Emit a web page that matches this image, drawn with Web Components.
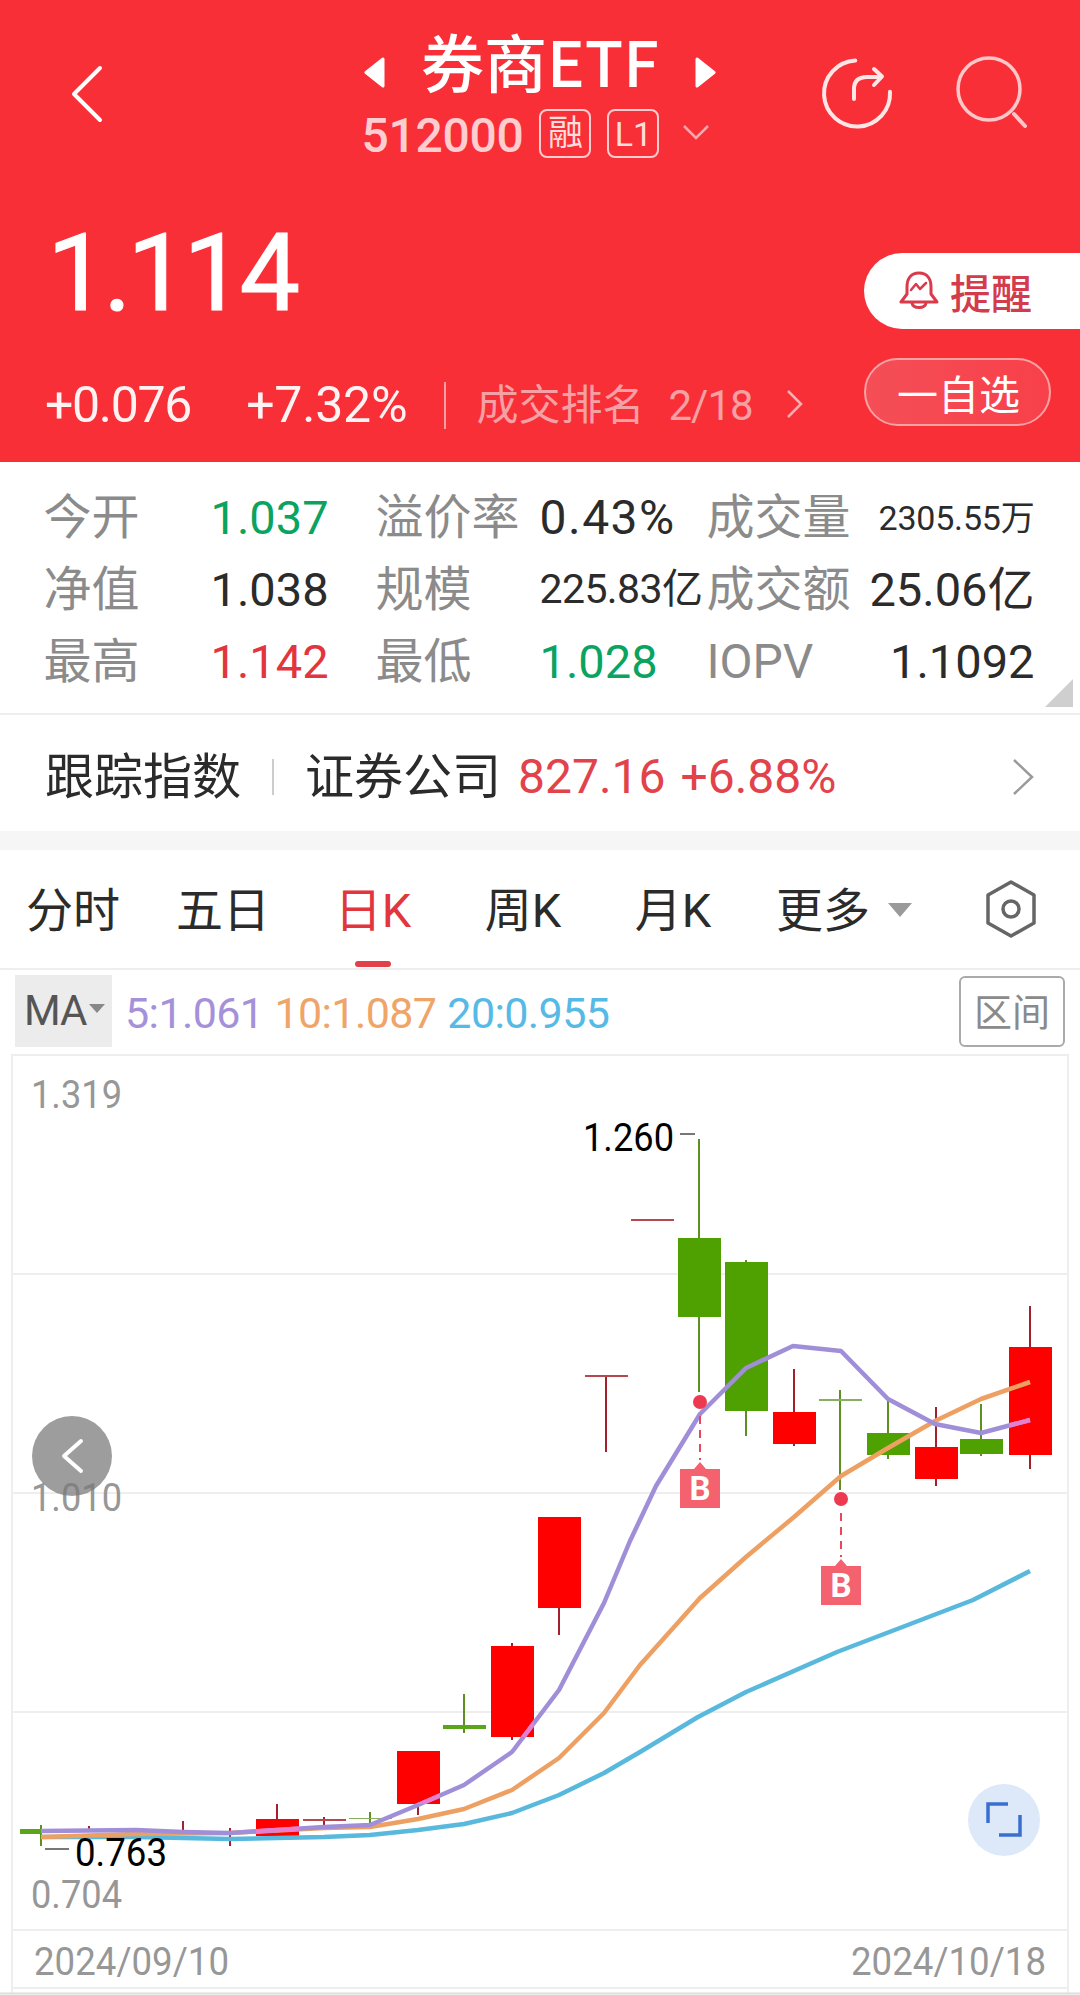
<!DOCTYPE html>
<html lang="zh">
<head>
<meta charset="utf-8">
<title>券商ETF</title>
<style>
  html, body { margin: 0; padding: 0; background: #fff; }
  body { width: 1080px; height: 1995px; overflow: hidden; font-family: Roboto, "Noto Sans CJK SC", sans-serif; }
</style>
</head>
<body>
<quote-header></quote-header>

<stat-grid>
  <stat-label>今开</stat-label><stat-value tone="green">1.037</stat-value>
  <stat-label>溢价率</stat-label><stat-value wide>0.43%</stat-value>
  <stat-label>成交量</stat-label><stat-value size="small" end>2305.55万</stat-value>
  <stat-label>净值</stat-label><stat-value>1.038</stat-value>
  <stat-label>规模</stat-label><stat-value tight>225.83亿</stat-value>
  <stat-label>成交额</stat-label><stat-value end>25.06亿</stat-value>
  <stat-label>最高</stat-label><stat-value tone="red">1.142</stat-value>
  <stat-label>最低</stat-label><stat-value tone="green">1.028</stat-value>
  <stat-label>IOPV</stat-label><stat-value end>1.1092</stat-value>
</stat-grid>

<index-row name="证券公司" value="827.16" change="+6.88%">跟踪指数</index-row>

<period-tabs>
  <period-tab>分时</period-tab>
  <period-tab>五日</period-tab>
  <period-tab active>日K</period-tab>
  <period-tab>周K</period-tab>
  <period-tab>月K</period-tab>
  <period-tab more>更多</period-tab>
</period-tabs>

<ma-bar></ma-bar>
<kline-chart></kline-chart>

<script>
const CJK = 'Roboto, "Noto Sans CJK SC", sans-serif';

class QuoteHeader extends HTMLElement {
  constructor() {
    super();
    this.attachShadow({ mode: "open" });
    this.shadowRoot.innerHTML = `
      <style>
        :host { display: block; height: 462px; background: #f92f38; color: #fff; font-family: ${CJK}; box-sizing: border-box; }
        svg { display: block; }
        .top { display: grid; grid-template-columns: 1fr auto 1fr; height: 165px; }
        .back { padding: 65px 0 0 71px; }
        .center { display: flex; flex-direction: column; align-items: center; }
        .title { display: flex; align-items: center; gap: 36px; height: 109px; padding-top: 19px; box-sizing: border-box; }
        .title svg { margin-top: 17px; }
        .title span { font: 500 63px/90px "Noto Sans CJK SC", sans-serif; margin-top: -8px; }
        .code { display: flex; align-items: center; height: 49px; padding-right: 6px; color: #fdcdd0; }
        .code b { font: 500 48px/49px Roboto, sans-serif; letter-spacing: -.3px; margin: 4px 16px 0 -2px; }
        .badge { width: 52px; height: 49px; box-sizing: border-box; border: 2px solid #fdcdd0; border-radius: 8px; display: flex; align-items: center; justify-content: center; font-size: 35px; line-height: 1; color: #fdd; margin-right: 16px; }
        .actions { display: flex; justify-content: flex-end; gap: 63px; padding: 56px 52px 0 0; align-items: flex-start; }
        .main { display: flex; justify-content: space-between; }
        .left { padding: 54px 0 0 45px; }
        .price { font: 400 108px/108px Roboto, sans-serif; letter-spacing: -4.5px; -webkit-text-stroke: 1px #fff; margin-left: 2px; height: 108px; }
        .change { display: flex; align-items: center; margin-top: 54px; height: 48px; }
        .change .num { font: 400 50px/48px Roboto, sans-serif; color: #fff2f2; letter-spacing: -1.3px; }
        .change .num + .num { margin-left: 55px; letter-spacing: -.2px; }
        .sep { width: 2px; height: 47px; background: #f9a0a0; margin: 0 30px 0 37px; }
        .rank { font-size: 42px; color: #f5a0a4; margin-top: -7px; }
        .rank em { font: 400 42px Roboto, sans-serif; margin-left: 24px; letter-spacing: -1px; }
        .rank-go { margin-left: 33px; margin-top: -3px; }
        .right { display: flex; flex-direction: column; padding-top: 88px; width: 216px; }
      </style>
      <div class="top">
        <div class="back">
          <svg width="32" height="58" viewBox="0 0 32 58"><path d="M29 3 3 29l26 26" fill="none" stroke="#fff" stroke-width="4" stroke-linecap="round" stroke-linejoin="round"/></svg>
        </div>
        <div class="center">
          <div class="title">
            <svg width="21" height="31" viewBox="0 0 21 31"><path d="M19 2 2 15.500 19 29Z" fill="#fff" stroke="#fff" stroke-width="3" stroke-linejoin="round"/></svg>
            <span>券商ETF</span>
            <svg width="21" height="31" viewBox="0 0 21 31"><path d="M2 2 19 15.500 2 29Z" fill="#fff" stroke="#fff" stroke-width="3" stroke-linejoin="round"/></svg>
          </div>
          <div class="code">
            <b>512000</b>
            <span class="badge">融</span>
            <span class="badge" style="font-family:Roboto,sans-serif;font-size:34px">L1</span>
            <svg width="28" height="16" viewBox="0 0 28 16" style="margin:-4px 0 0 7px"><path d="M2 2 14 14 26 2" fill="none" stroke="#fba9ae" stroke-width="2.500"/></svg>
          </div>
        </div>
        <div class="actions">
          <svg width="72" height="74" viewBox="0 0 72 74">
            <path d="M36 4.500A33 33 0 1 0 69 37.500" fill="none" stroke="#ffe6e6" stroke-width="4" stroke-linecap="round" transform="rotate(-3 36 37)"/>
            <path d="M33 43V33Q33 21 46 21H59M53 13 61 20.500 53 29" fill="none" stroke="#ffe6e6" stroke-width="4" stroke-linecap="round" stroke-linejoin="round"/>
          </svg>
          <svg width="72" height="74" viewBox="0 0 72 74">
            <circle cx="33" cy="33" r="31" fill="none" stroke="#fdc6c8" stroke-width="3.500"/>
            <path d="M58 58 69 70" stroke="#fdc6c8" stroke-width="4" stroke-linecap="round"/>
          </svg>
        </div>
      </div>
      <div class="main">
        <div class="left">
          <div class="price">1.114</div>
          <div class="change">
            <span class="num">+0.076</span>
            <span class="num">+7.32%</span>
            <span class="sep"></span>
            <span class="rank">成交排名<em>2/18</em></span>
            <svg class="rank-go" width="17" height="30" viewBox="0 0 17 30"><path d="M2 2 15 15 2 28" fill="none" stroke="#f8b0b3" stroke-width="2.500"/></svg>
          </div>
        </div>
        <div class="right">
          <pill-button kind="alert">
            <svg slot="icon" width="40" height="40" viewBox="0 0 40 40" fill="none" stroke="#d93a4c" stroke-width="3" stroke-linejoin="round" stroke-linecap="round">
              <path d="M20 2C11 2 8 9 8 16V23L2 31H38L32 23V16C32 9 29 2 20 2Z"/>
              <path d="M13 32C14 38 26 38 27 32"/>
              <path d="M12 19 17 13 21 18 27 12" stroke-width="2.500"/>
            </svg>
            提醒
          </pill-button>
          <pill-button>一自选</pill-button>
        </div>
      </div>
    `;
  }
}
customElements.define("quote-header", QuoteHeader);

class PillButton extends HTMLElement {
  constructor() {
    super();
    this.attachShadow({ mode: "open" });
    this.shadowRoot.innerHTML = `
      <style>
        :host { display: flex; align-items: center; box-sizing: border-box; font-size: 41px; line-height: 1; font-family: "Noto Sans CJK SC", sans-serif;
          width: 187px; height: 68px; margin-top: 29px; border: 2px solid #f9a2a4; border-radius: 34px; background: linear-gradient(90deg, #f44e57, #f8404a); color: #fff; justify-content: center; padding-left: 2px; }
        :host([kind="alert"]) { width: 216px; height: 76px; margin-top: 0; border: 0; border-radius: 38px 0 0 38px; background: #fff; color: #d33c4c; justify-content: flex-start; padding-left: 35px; gap: 11px; font-weight: 500; }
        ::slotted(svg) { display: block; }
      </style>
      <slot name="icon"></slot><slot></slot>
    `;
  }
}
customElements.define("pill-button", PillButton);

class StatGrid extends HTMLElement {
  constructor() {
    super();
    this.attachShadow({ mode: "open" });
    this.shadowRoot.innerHTML = `
      <style>
        :host { display: block; position: relative; height: 253px; box-sizing: border-box; border-bottom: 2px solid #eee; padding: 20px 0 0 43.500px; }
        .grid { display: grid; grid-template-columns: 167px 165px 164px 167px 165px 163px; grid-auto-rows: 72px; align-items: center; }
        .corner { position: absolute; right: 7px; bottom: 6px; width: 28px; height: 28px; background: #cfcfcf; clip-path: polygon(100% 0, 100% 100%, 0 100%); }
      </style>
      <div class="grid"><slot></slot></div>
      <div class="corner"></div>
    `;
  }
}
customElements.define("stat-grid", StatGrid);

class StatLabel extends HTMLElement {
  constructor() {
    super();
    this.attachShadow({ mode: "open" });
    this.shadowRoot.innerHTML = `
      <style>:host { display: block; font: 400 48px/1.2 ${CJK}; color: #8b8b8b; white-space: nowrap; }</style>
      <slot></slot>
    `;
  }
}
customElements.define("stat-label", StatLabel);

class StatValue extends HTMLElement {
  constructor() {
    super();
    this.attachShadow({ mode: "open" });
    this.shadowRoot.innerHTML = `
      <style>
        :host { display: block; font: 400 47px/1.2 ${CJK}; color: #2b2b2b; white-space: nowrap; letter-spacing: 0; }
        :host([tone="green"]) { color: #0aa35f; }
        :host([tone="red"]) { color: #e2363f; }
        :host([end]) { justify-self: end; }
        :host([size="small"]) { font-size: 34px; letter-spacing: -.2px; }
        :host([tight]) { font-size: 41px; letter-spacing: -.6px; }
        :host([wide]) { font-size: 48px; letter-spacing: 1.500px; }
      </style>
      <slot></slot>
    `;
  }
}
customElements.define("stat-value", StatValue);

class IndexRow extends HTMLElement {
  connectedCallback() {
    if (this.shadowRoot) return;
    this.attachShadow({ mode: "open" });
    this.shadowRoot.innerHTML = `
      <style>
        :host { display: flex; align-items: center; height: 135px; box-sizing: border-box; padding: 8px 45px 0; border-bottom: 19px solid #f6f6f6; font: 400 49px/1 ${CJK}; color: #2b2b2b; }
        .sep { width: 2px; height: 36px; background: #ccc; margin: 0 31px; }
        .hot { color: #e2434b; margin-left: 17px; font-size: 48px; word-spacing: 3px; white-space: nowrap; }
        .go { margin-left: auto; }
      </style>
      <slot></slot>
      <span class="sep"></span>
      <span>${this.getAttribute("name")}</span>
      <span class="hot">${this.getAttribute("value")} ${this.getAttribute("change")}</span>
      <svg class="go" width="24" height="38" viewBox="0 0 24 38"><path d="M3 2 21 19 3 36" fill="none" stroke="#9a9a9a" stroke-width="2.500"/></svg>
    `;
  }
}
customElements.define("index-row", IndexRow);

class PeriodTabs extends HTMLElement {
  constructor() {
    super();
    this.attachShadow({ mode: "open" });
    this.shadowRoot.innerHTML = `
      <style>
        :host { display: flex; align-items: center; height: 120px; box-sizing: border-box; border-bottom: 2px solid #eee; position: relative; }
        .tabs { display: grid; grid-template-columns: repeat(6, 150px); height: 100%; margin-left: -2px; }
        .gear { position: absolute; right: 43px; top: 30px; }
      </style>
      <div class="tabs"><slot></slot></div>
      <svg class="gear" width="52" height="58" viewBox="0 0 52 58" fill="none" stroke="#666" stroke-width="3.500" stroke-linejoin="round">
        <path d="M26 2 49 15V43L26 56 3 43V15Z"/>
        <circle cx="26" cy="29" r="8"/>
      </svg>
    `;
  }
}
customElements.define("period-tabs", PeriodTabs);

class PeriodTab extends HTMLElement {
  constructor() {
    super();
    this.attachShadow({ mode: "open" });
    this.shadowRoot.innerHTML = `
      <style>
        :host { display: flex; align-items: center; justify-content: center; position: relative; font: 400 47px/1 ${CJK}; color: #2b2b2b; padding-top: 2px; box-sizing: border-box; }
        :host([active]) { color: #e2363f; }
        :host([active]) .bar { display: block; }
        :host([more]) .arrow { display: block; }
        .bar { display: none; position: absolute; left: 57px; bottom: 1px; width: 36px; height: 6px; border-radius: 3px; background: #e2404a; }
        .arrow { display: none; position: absolute; left: 140px; top: 53px; width: 0; height: 0; border: 12px solid transparent; border-top: 14px solid #9a9a9a; border-bottom: 0; }
      </style>
      <span><slot></slot></span>
      <span class="bar"></span>
      <span class="arrow"></span>
    `;
  }
}
customElements.define("period-tab", PeriodTab);

class MaBar extends HTMLElement {
  constructor() {
    super();
    this.attachShadow({ mode: "open" });
    this.shadowRoot.innerHTML = `
      <style>
        :host { display: flex; align-items: center; height: 84px; box-sizing: border-box; padding: 5px 15px 7px; font: 400 43px/1 Roboto, sans-serif; }
        .sel { display: flex; align-items: center; width: 97px; height: 72px; background: #ececec; color: #555; padding-left: 9px; box-sizing: border-box; letter-spacing: -1px; flex: none; font-size: 42px; }
        .sel i { width: 0; height: 0; border: 8px solid transparent; border-top: 9px solid #888; border-bottom: 0; margin: -6px 0 0 3px; }
        .vals { display: flex; gap: 11px; margin: 4px 0 0 13px; letter-spacing: -.6px; }
        .range { margin-left: auto; width: 106px; height: 71px; box-sizing: border-box; border: 2px solid #aaa; border-radius: 6px; color: #8a8a8a; display: flex; align-items: center; justify-content: center; font: 400 38px/1 ${CJK}; padding-top: 4px; }
      </style>
      <div class="sel">MA<i></i></div>
      <div class="vals">
        <span style="color:#a591da">5:1.061</span>
        <span style="color:#efa468">10:1.087</span>
        <span style="color:#56b9e6">20:0.955</span>
      </div>
      <div class="range">区间</div>
    `;
  }
}
customElements.define("ma-bar", MaBar);

// page coordinates, the svg viewBox starts at y 1054
const CANDLES = [
  [41, "g", 1831, 1831, 1825, 1846, 21, 20],
  [183, "r", 0, 0, 1821, 1831],
  [230, "r", 0, 0, 1828, 1846],
  [89, "r", 0, 0, 1826, 1832],
  [277, "r", 1819, 1836, 1804, 1836],
  [324, "r", 1819, 1821, 1817, 1825],
  [370, "g", 1818, 1819, 1812, 1823],
  [418, "r", 1751, 1804, 1751, 1815],
  [464, "g", 1725, 1729, 1694, 1733],
  [512, "r", 1646, 1737, 1643, 1740],
  [559, "r", 1517, 1608, 1517, 1635],
  [606, "r", 1375, 1377, 1375, 1452],
  [652, "r", 1219, 1221, 1219, 1221],
  [699, "g", 1238, 1317, 1139, 1392],
  [746, "g", 1262, 1411, 1260, 1436],
  [794, "r", 1412, 1444, 1369, 1446],
  [840, "g", 1399, 1401, 1390, 1490],
  [888, "g", 1433, 1455, 1398, 1459],
  [936, "r", 1447, 1479, 1407, 1486],
  [981, "g", 1439, 1454, 1404, 1456],
  [1030, "r", 1347, 1455, 1306, 1469],
];
const MA5 = "41,1831 136,1830 183,1832 230,1833 277,1830 324,1827 370,1825 418,1805 464,1785 512,1752 559,1690 604,1603 630,1541 656,1486 700,1414 746,1368 793,1346 841,1351 888,1399 935,1424 981,1433 1030,1420";
const MA10 = "41,1837 136,1834 230,1833 324,1828 370,1827 418,1819 464,1809 512,1790 559,1758 604,1713 640,1665 700,1598 746,1557 794,1517 841,1476 888,1448 935,1421 981,1399 1030,1382";
const MA20 = "41,1837 136,1837 230,1839 324,1837 370,1835 418,1830 464,1824 512,1813 559,1795 604,1773 640,1752 698,1717 746,1692 837,1652 973,1600 1030,1571";

class KlineChart extends HTMLElement {
  constructor() {
    super();
    this.attachShadow({ mode: "open" });
    let grid = "";
    for (const y of [1055, 1274, 1493, 1712, 1930, 1988]) {
      grid += `<line x1="12" x2="1068" y1="${y}" y2="${y}" stroke="#eeeeee" stroke-width="2"/>`;
    }
    let bodies = "", clip = "";
    for (const c of CANDLES) {
      const [x, kind, top, bottom, hi, lo, w1] = c;
      const wick = kind == "g" ? "#5c9122" : "#a3202c";
      const fill = kind == "g" ? "#4ea100" : "#ff0000";
      const left = w1 ? x - w1 : x - 21, width = w1 ? w1 : 43;
      bodies += `<line x1="${x}" x2="${x}" y1="${hi}" y2="${lo}" stroke="${wick}" stroke-width="2"/>`;
      if (top && bottom) {
        const thin = bottom - top < 3;
        bodies += `<rect x="${left}" y="${top}" width="${width}" height="${bottom - top}" fill="${thin ? (kind == "g" ? "#86b060" : "#b84850") : fill}"/>`;
        if (kind == "r" && !thin) clip += `<rect x="${left}" y="${top}" width="${width}" height="${bottom - top}"/>`;
      }
    }
    this.shadowRoot.innerHTML = `
      <style>
        :host { display: block; position: relative; height: 941px; }
        svg.plot { display: block; position: absolute; left: 0; top: 0; }
        text { font-family: Roboto, sans-serif; }
        .axis { font-size: 38px; fill: #979797; }
        .mark { font-size: 39px; fill: #000; }
        .fold { position: absolute; left: 32px; top: 362px; width: 80px; height: 80px; border-radius: 50%; background: rgba(120,120,120,.73); display: flex; align-items: center; justify-content: center; }
        .full { position: absolute; left: 968px; top: 730px; width: 72px; height: 72px; border-radius: 50%; background: #dde8f8; display: flex; align-items: center; justify-content: center; }
      </style>
      <svg class="plot" width="1080" height="941" viewBox="0 1054 1080 941">
        <defs><clipPath id="over-red">${clip}</clipPath></defs>
        ${grid}
        <line x1="12" x2="12" y1="1054" y2="1993" stroke="#eeeeee" stroke-width="2"/>
        <line x1="1068" x2="1068" y1="1054" y2="1993" stroke="#eeeeee" stroke-width="2"/>
        <line x1="0" x2="1080" y1="1993.500" y2="1993.500" stroke="#dddddd" stroke-width="2"/>
        <text class="axis" x="31" y="1108" textLength="91" lengthAdjust="spacingAndGlyphs">1.319</text>
        <text class="axis" x="31" y="1511" textLength="91" lengthAdjust="spacingAndGlyphs">1.010</text>
        <text class="axis" x="31" y="1908" textLength="91" lengthAdjust="spacingAndGlyphs">0.704</text>
        <text class="axis" x="34" y="1975" textLength="195" lengthAdjust="spacingAndGlyphs">2024/09/10</text>
        <text class="axis" x="851" y="1975" textLength="195" lengthAdjust="spacingAndGlyphs">2024/10/18</text>
        ${bodies}
        <rect x="20" y="1829" width="21" height="5" fill="#5aa51a"/>
        <rect x="443" y="1725" width="43" height="4" fill="#5aa51a"/>
        <polyline points="${MA20}" fill="none" stroke="#58b9dc" stroke-width="4.500" stroke-linejoin="round"/>
        <polyline points="${MA10}" fill="none" stroke="#eea063" stroke-width="4.500" stroke-linejoin="round"/>
        <polyline points="${MA5}" fill="none" stroke="#a08fd8" stroke-width="4.500" stroke-linejoin="round"/>
        <polyline points="${MA5}" fill="none" stroke="#e67fd0" stroke-width="4.500" stroke-linejoin="round" clip-path="url(#over-red)"/>
        <text class="mark" x="583" y="1151" textLength="91" lengthAdjust="spacingAndGlyphs">1.260</text>
        <line x1="680" x2="695" y1="1134" y2="1134" stroke="#777" stroke-width="2"/>
        <text class="mark" x="75" y="1866" textLength="92" lengthAdjust="spacingAndGlyphs">0.763</text>
        <line x1="45" x2="69" y1="1849" y2="1849" stroke="#777" stroke-width="2"/>
        ${KlineChart.buy(700, 1402)}
        ${KlineChart.buy(841, 1499)}
      </svg>
      <div class="fold">
        <svg width="24" height="36" viewBox="0 0 24 36"><path d="M21 3 4 18 21 33" fill="none" stroke="#fff" stroke-width="4" stroke-linecap="round" stroke-linejoin="round"/></svg>
      </div>
      <div class="full">
        <svg width="36" height="36" viewBox="0 0 36 36" fill="none" stroke="#3a6fd0" stroke-width="3.500"><path d="M2 21V2H22M34 13V33H13"/></svg>
      </div>
    `;
  }
  static buy(x, y) {
    const top = y + 67;
    return `
      <circle cx="${x}" cy="${y}" r="7" fill="#ee3a50"/>
      <line x1="${x}" x2="${x}" y1="${y + 14}" y2="${y + 58}" stroke="#e8485c" stroke-width="2" stroke-dasharray="8 6"/>
      <path d="M${x - 20} ${top}H${x - 6}L${x} ${top - 7}L${x + 6} ${top}H${x + 20}V${top + 39}H${x - 20}Z" fill="#f4616f"/>
      <text x="${x}" y="${top + 31}" text-anchor="middle" font-size="33" font-weight="700" fill="#fff">B</text>`;
  }
}
customElements.define("kline-chart", KlineChart);
</script>
</body>
</html>
